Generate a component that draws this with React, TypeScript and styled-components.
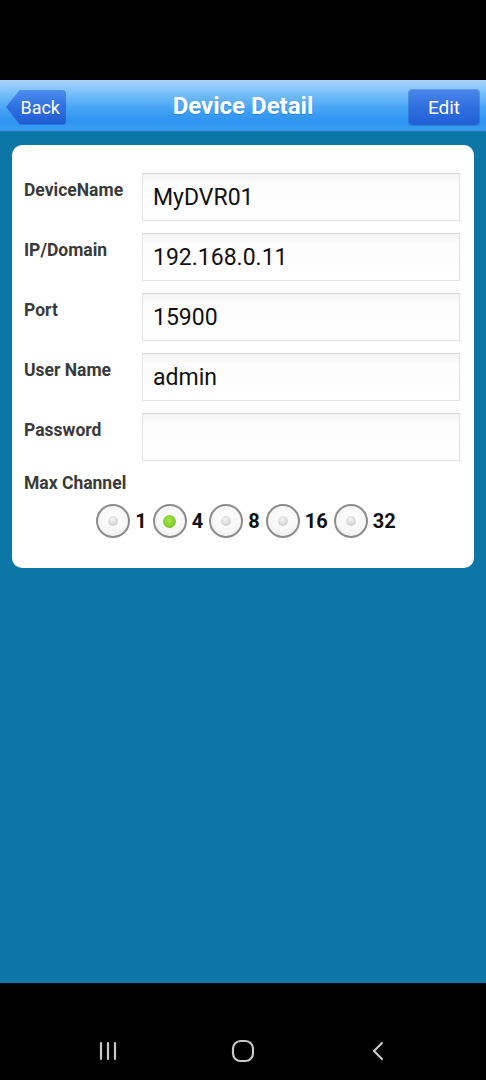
import React from "react";
import styled, { createGlobalStyle } from "styled-components";

const Global = createGlobalStyle`
  html, body { margin: 0; padding: 0; background: #000; }
  body { font-family: Roboto, "Liberation Sans", Arial, sans-serif; }
  * { box-sizing: border-box; }
`;

const Screen = styled.div`
  width: 486px;
  height: 1080px;
  display: flex;
  flex-direction: column;
  background: #000;
  overflow: hidden;
`;

const StatusBar = styled.div`
  height: 80px;
  background: #000;
  flex: none;
`;

const Header = styled.div`
  position: relative;
  height: 52px;
  flex: none;
  display: flex;
  align-items: center;
  justify-content: space-between;
  padding: 0 7px 0 6px;
  background: linear-gradient(
    180deg,
    #a9d6fb 0%,
    #79bff9 25%,
    #45a4f5 55%,
    #2d93f0 80%,
    #3a9ef3 96%,
    #1b6fb0 100%
  );
`;

const Title = styled.div`
  position: absolute;
  left: 0;
  right: 0;
  top: 0;
  bottom: 0;
  display: flex;
  align-items: center;
  justify-content: center;
  color: #fff;
  font-weight: 700;
  font-size: 24px;
  pointer-events: none;
  text-shadow: 0 1px 1px rgba(0, 60, 140, 0.25);
`;

const BackButton = styled.div`
  position: relative;
  z-index: 1;
  height: 35px;
  width: 60px;
  margin-top: 2px;
  display: flex;
  align-items: center;
  justify-content: flex-end;
  padding-right: 6px;
  color: #fff;
  font-size: 18px;
  background: linear-gradient(180deg, #4c8df0 0%, #2f6fe0 50%, #1f5bd2 100%);
  clip-path: polygon(14px 0, 100% 0, 100% 100%, 14px 100%, 0 50%);
  border-radius: 0 4px 4px 0;
`;

const EditButton = styled.div`
  position: relative;
  z-index: 1;
  height: 35px;
  width: 70px;
  margin-top: 2px;
  display: flex;
  align-items: center;
  justify-content: center;
  color: #fff;
  font-size: 19px;
  border-radius: 3px;
  background: linear-gradient(180deg, #4b86ec 0%, #2f6ee0 50%, #2160d6 100%);
  box-shadow: 0 0 0 1px rgba(30, 80, 170, 0.35);
`;

const Content = styled.div`
  flex: 1;
  background: #0c77a6;
  padding: 13px 12px 0 12px;
`;

const Card = styled.div`
  background: #fff;
  border-radius: 10px;
  padding: 28px 14px 30px 12px;
  display: flex;
  flex-direction: column;
`;

const Row = styled.div`
  display: grid;
  grid-template-columns: 118px 1fr;
  align-items: start;
  margin-bottom: 12px;
`;

const Label = styled.div`
  font-weight: 700;
  font-size: 17.5px;
  color: #3a3a3a;
  padding-top: 7px;
  white-space: nowrap;
`;

const Field = styled.div`
  height: 48px;
  border: 1px solid #e2e2e2;
  border-top-color: #d6d6d6;
  background: linear-gradient(180deg, #f4f4f4 0%, #fcfcfc 20%, #fff 100%);
  display: flex;
  align-items: center;
  padding-left: 10px;
  font-size: 23px;
  color: #111;
`;

const SectionLabel = styled.div`
  font-weight: 700;
  font-size: 17.5px;
  color: #3a3a3a;
`;

const RadioRow = styled.div`
  display: flex;
  align-items: center;
  justify-content: center;
  margin-top: 11px;
  padding-left: 14px;
`;

const RadioItem = styled.div`
  display: flex;
  align-items: center;
  margin-right: 6px;
`;

const Circle = styled.div`
  width: 34px;
  height: 34px;
  border-radius: 50%;
  border: 2px solid #8c8c8c;
  background: radial-gradient(circle at 50% 40%, #ffffff 0%, #f6f6f6 60%, #e8e8e8 100%);
  display: flex;
  align-items: center;
  justify-content: center;
`;

const Dot = styled.div<{ $on?: boolean }>`
  width: ${(p) => (p.$on ? 13 : 10)}px;
  height: ${(p) => (p.$on ? 13 : 10)}px;
  border-radius: 50%;
  background: ${(p) =>
    p.$on
      ? "radial-gradient(circle at 45% 40%, #a6e84a 0%, #7cc824 70%, #62a81a 100%)"
      : "radial-gradient(circle at 45% 35%, #f4f4f4 0%, #d2d2d2 70%, #b8b8b8 100%)"};
`;

const RadioText = styled.span`
  font-weight: 700;
  font-size: 20px;
  color: #111;
  margin-left: 5px;
`;

const NavBar = styled.div`
  height: 97px;
  flex: none;
  background: #000;
  display: flex;
  align-items: center;
  justify-content: center;
  gap: 112px;
  padding-top: 38px;
`;

const fields = [
  { label: "DeviceName", value: "MyDVR01" },
  { label: "IP/Domain", value: "192.168.0.11" },
  { label: "Port", value: "15900" },
  { label: "User Name", value: "admin" },
  { label: "Password", value: "" },
];

const channels = [1, 4, 8, 16, 32];

export default function App() {
  return (
    <Screen>
      <Global />
      <StatusBar />
      <Header>
        <BackButton>Back</BackButton>
        <Title>Device Detail</Title>
        <EditButton>Edit</EditButton>
      </Header>
      <Content>
        <Card>
          {fields.map((f) => (
            <Row key={f.label}>
              <Label>{f.label}</Label>
              <Field>{f.value}</Field>
            </Row>
          ))}
          <SectionLabel>Max Channel</SectionLabel>
          <RadioRow>
            {channels.map((c) => (
              <RadioItem key={c}>
                <Circle>
                  <Dot $on={c === 4} />
                </Circle>
                <RadioText>{c}</RadioText>
              </RadioItem>
            ))}
          </RadioRow>
        </Card>
      </Content>
      <NavBar>
        <svg width="22" height="22" viewBox="0 0 22 22">
          <g stroke="#c8c8c8" strokeWidth="2.2" strokeLinecap="round">
            <line x1="4" y1="3" x2="4" y2="19" />
            <line x1="11" y1="3" x2="11" y2="19" />
            <line x1="18" y1="3" x2="18" y2="19" />
          </g>
        </svg>
        <svg width="24" height="24" viewBox="0 0 24 24">
          <rect x="2" y="2" width="20" height="20" rx="7.5" fill="none" stroke="#c8c8c8" strokeWidth="2.2" />
        </svg>
        <svg width="22" height="22" viewBox="0 0 22 22">
          <polyline points="15,3 7,11 15,19" fill="none" stroke="#c8c8c8" strokeWidth="2.2" strokeLinecap="round" strokeLinejoin="round" />
        </svg>
      </NavBar>
    </Screen>
  );
}
